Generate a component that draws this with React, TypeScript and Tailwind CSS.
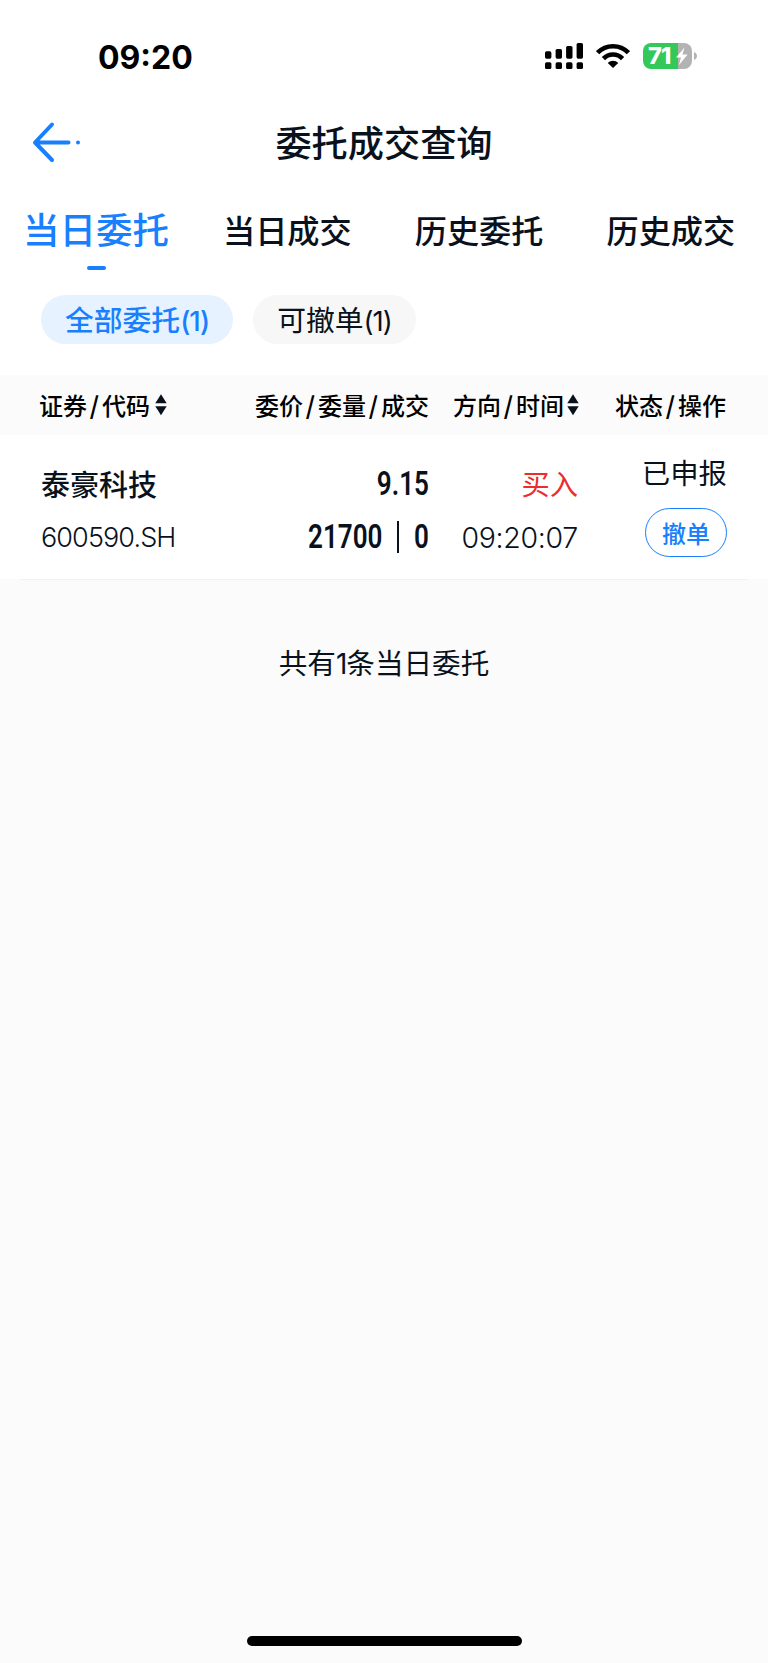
import { useState } from 'react'
import clsx from 'clsx'

const tabs = ['当日委托', '当日成交', '历史委托', '历史成交']

const filters = [
  { key: 'all', label: '全部委托', count: 1 },
  { key: 'cancelable', label: '可撤单', count: 1 },
]

function StatusBar() {
  return (
    <div className="flex h-[94px] items-start pt-[43px] pl-[98px]">
      <span className="w-[447px] pt-px font-['Inter'] text-[32px] leading-[28px] font-bold text-black">09:20</span>
      <svg width="38" height="26" viewBox="0 0 38 26" className="shrink-0">
        <rect x="0" y="8.3" width="6.4" height="7.4" rx="1.6" />
        <rect x="10.6" y="6" width="6.4" height="9.7" rx="1.6" />
        <rect x="21.1" y="3" width="6.4" height="12.7" rx="1.6" />
        <rect x="31.6" y="0" width="6.4" height="15.7" rx="1.6" />
        <rect x="0" y="19.2" width="6.4" height="6.8" rx="1.6" />
        <rect x="10.6" y="19.2" width="6.4" height="6.8" rx="1.6" />
        <rect x="21.1" y="19.2" width="6.4" height="6.8" rx="1.6" />
        <rect x="31.6" y="19.2" width="6.4" height="6.8" rx="1.6" />
      </svg>
      <svg width="34" height="26" viewBox="0 0 34 26" className="ml-[13px] shrink-0">
        <g fill="none" stroke="#000" strokeWidth="4.6">
          <path d="M1.6 9.7 C10 1 24 1 32.4 9.7" />
          <path d="M7.4 15.6 C12.8 10.2 21.2 10.2 26.6 15.6" />
        </g>
        <path d="M17 25 L11.8 19.9 C14.7 17.1 19.3 17.1 22.2 19.9 Z" />
      </svg>
      <div className="ml-[13px] flex h-[26px] items-center">
        <div className="relative flex h-[26px] w-[49px] items-center rounded-[8px] bg-[linear-gradient(to_right,#34c759_35px,#b3b3b3_35px)] pl-[5px]">
          <span className="font-['Inter'] text-[23.5px] leading-[26px] font-extrabold tracking-[-0.8px] text-white">71</span>
          <svg width="12" height="18" viewBox="0 0 12 18" className="absolute top-[4px] left-[33px]">
            <path d="M8.5 0.5 L0 10.4 H5 L3 18 L11.6 7.6 H6.5 Z" fill="#fff" />
          </svg>
        </div>
        <svg width="3" height="8" viewBox="0 0 3 8" className="ml-[2px]">
          <path d="M0 0 C4 1.5 4 6.5 0 8 Z" fill="#b3b3b3" />
        </svg>
      </div>
    </div>
  )
}

function SortIcon() {
  return (
    <svg width="12" height="22" viewBox="0 0 12 22" className="-mt-px shrink-0" fill="#09121c">
      <path d="M6 0.3 L11.7 9.3 H0.3 Z" />
      <path d="M0.3 12.3 H11.7 L6 21.3 Z" />
    </svg>
  )
}

function Slash() {
  return <span className="w-[15px] text-center font-bold">/</span>
}

export default function App() {
  const [tab, setTab] = useState('当日委托')
  const [filter, setFilter] = useState('all')

  return (
    <div className="flex h-[1663px] w-[768px] flex-col overflow-hidden bg-[#fbfbfb] font-['Noto_Sans_CJK_SC',sans-serif] text-[#09121c]">
      <div className="bg-white">
        <StatusBar />

        <header className="grid h-[96px] grid-cols-[100px_1fr_100px] items-center">
          <button className="pl-[31px]">
            <svg width="50" height="42" viewBox="0 0 50 42" fill="none" stroke="#187fff" strokeWidth="4" strokeLinecap="round" strokeLinejoin="round">
              <path d="M21 3.5 L4 21.5 L21 39 M4.5 21.5 H37.5" />
              <circle cx="47" cy="21.5" r="2" fill="#187fff" stroke="none" />
            </svg>
          </button>
          <h1 className="-mt-[2px] text-center text-[36.2px] leading-[50px] font-medium">委托成交查询</h1>
        </header>

        <nav className="flex h-[105px] pl-[23px]">
          {tabs.map((t) => (
            <button
              key={t}
              onClick={() => setTab(t)}
              className={clsx(
                'flex flex-col items-center pt-[14px] font-medium whitespace-nowrap',
                t === tab ? 'mr-[54px] w-[146px] text-[36.5px] text-[#187fff]' : 'mr-[63px] w-[129px] text-[32.2px]',
              )}
            >
              <span className="leading-[50px]">{t}</span>
              {t === tab && <span className="mt-[12px] h-[4px] w-[19px] rounded-full bg-[#187fff]" />}
            </button>
          ))}
        </nav>

        <div className="flex h-[80px] gap-[20px] pl-[41px]">
          {filters.map((f) => (
            <button
              key={f.key}
              onClick={() => setFilter(f.key)}
              className={clsx(
                'h-[49px] rounded-full text-[28.8px] leading-[47px] whitespace-nowrap',
                f.key === 'all' ? 'w-[192px]' : 'w-[163px]',
                f.key === filter ? 'bg-[#e6f2ff] font-medium text-[#187fff]' : 'bg-[#f7f7f7]',
              )}
            >
              {f.label}
              <span className="font-['Inter'] text-[27.5px] tracking-[-1px]">({f.count})</span>
            </button>
          ))}
        </div>
      </div>

      <div className="flex h-[60px] items-center pl-[39px] text-[24px] leading-[36px] font-medium text-black">
        <div className="flex w-[216px] items-center">
          证券<Slash />代码
          <span className="ml-[5px] flex"><SortIcon /></span>
        </div>
        <div className="flex w-[198px]">
          委价<Slash />委量<Slash />成交
        </div>
        <div className="flex w-[162px] items-center">
          方向<Slash />时间
          <span className="ml-[3px] flex"><SortIcon /></span>
        </div>
        <div className="flex">
          状态<Slash />操作
        </div>
      </div>

      <div className="flex h-[144px] bg-white px-[41px]">
        <div className="flex w-[188px] flex-col pt-[28px]">
          <span className="text-[29px] leading-[40px] font-medium">泰豪科技</span>
          <span className="mt-[15px] font-['Inter'] text-[27px] leading-[40px] font-[350] tracking-[-0.9px]">600590.SH</span>
        </div>
        <div className="flex w-[200px] flex-col items-end pt-[29px] font-['Roboto'] text-[33px] leading-[40px] font-semibold">
          <span className="origin-right scale-x-[0.79]">9.15</span>
          <span className="mt-[13px] flex items-center">
            <span className="w-[76px]"><span className="inline-block origin-left scale-x-[0.79]">21700</span></span>
            <span className="ml-[13px] h-[32px] w-[2px] bg-[#09121c]" />
            <span className="ml-[15px] w-[15px]"><span className="inline-block origin-left scale-x-[0.79]">0</span></span>
          </span>
        </div>
        <div className="flex w-[149px] flex-col items-end pt-[28px]">
          <span className="text-[28.3px] leading-[40px] text-[#eb2d2d]">买入</span>
          <span className="mt-[15px] font-['Inter'] text-[28.5px] leading-[40px] font-[350] tracking-[-0.3px]">09:20:07</span>
        </div>
        <div className="flex flex-1 flex-col items-end pt-[17px]">
          <span className="text-[28.4px] leading-[40px]">已申报</span>
          <button className="mt-[16px] h-[49px] w-[82px] rounded-full border border-[#187fff] text-[24px] leading-[42px] font-medium text-[#187fff]">
            撤单
          </button>
        </div>
      </div>
      <div className="mx-[20px] h-px bg-[#f1f1f1]" />

      <p className="mt-[62px] text-center text-[28.6px] leading-[40px]">
        共有<span className="font-['Inter'] text-[28px] tracking-[-1px]">1</span>条当日委托
      </p>

      <div className="mx-auto mt-auto mb-[17px] h-[10px] w-[275px] rounded-full bg-black" />
    </div>
  )
}
